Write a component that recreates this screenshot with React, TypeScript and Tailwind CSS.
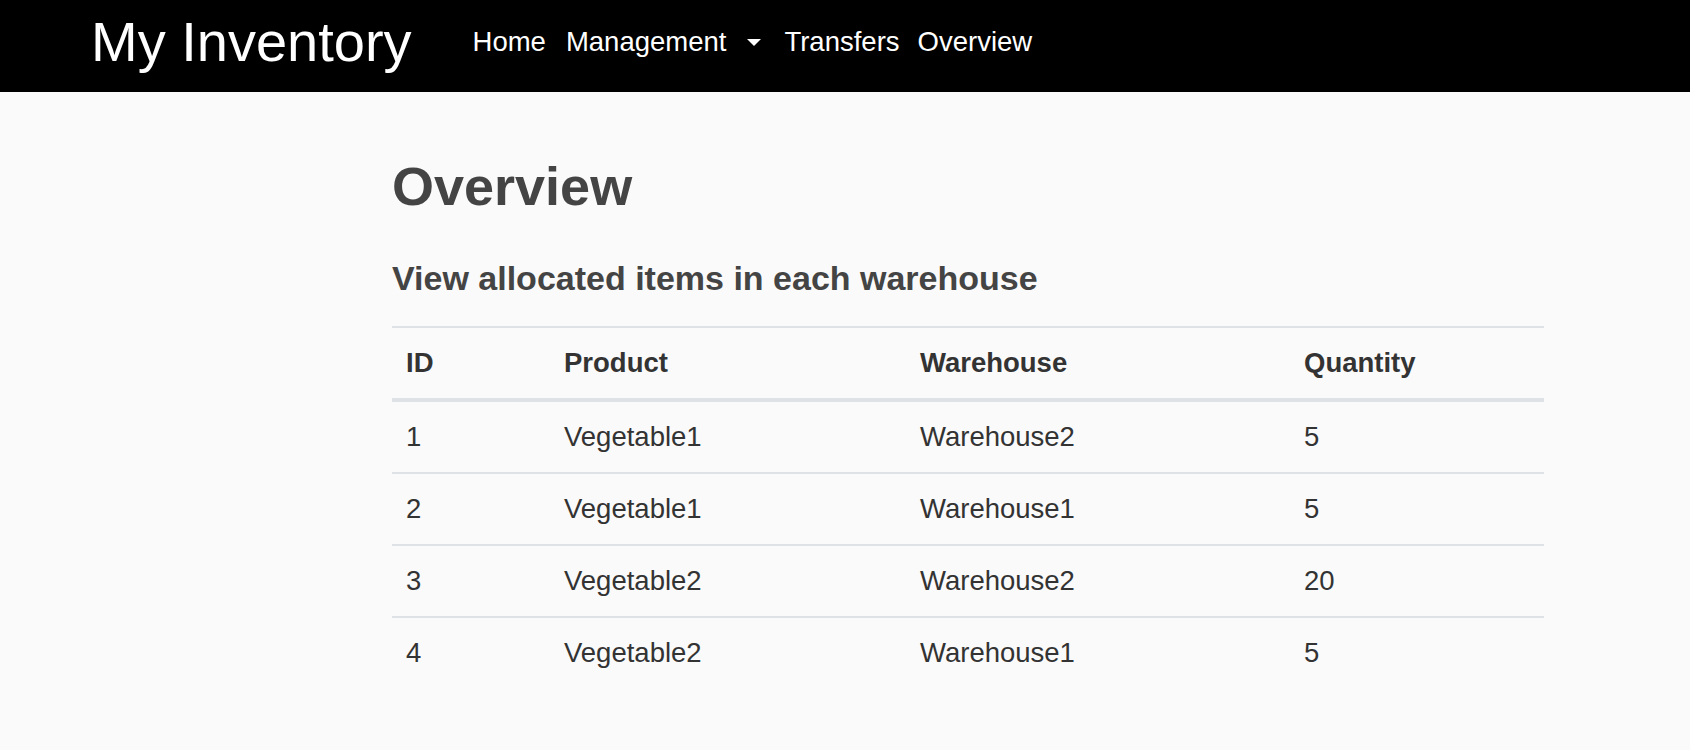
const rows = [
  { id: 1, product: 'Vegetable1', warehouse: 'Warehouse2', quantity: 5 },
  { id: 2, product: 'Vegetable1', warehouse: 'Warehouse1', quantity: 5 },
  { id: 3, product: 'Vegetable2', warehouse: 'Warehouse2', quantity: 20 },
  { id: 4, product: 'Vegetable2', warehouse: 'Warehouse1', quantity: 5 },
];

function Navbar() {
  return (
    <nav className="h-[92px] bg-black flex items-center pb-[8px] pl-[91px] text-white">
      <a href="#" className="text-[56px] leading-[56px] mr-[51px]">
        My Inventory
      </a>
      <div className="flex items-center text-[27.5px] leading-[40px]">
        <a href="#" className="px-[10px]">
          Home
        </a>
        <a href="#" className="px-[10px] flex items-center">
          Management
          <span className="ml-[21px] mr-[3px] w-0 h-0 border-t-[7px] border-x-[7px] border-x-transparent border-t-white" />
        </a>
        <a href="#" className="px-[10px]">
          Transfers
        </a>
        <a href="#" className="px-[8px]">
          Overview
        </a>
      </div>
    </nav>
  );
}

export default function App() {
  return (
    <div className="min-h-screen bg-[#fafafa] font-['Liberation_Sans',Arial,sans-serif]">
      <Navbar />
      <main className="ml-[392px] w-[1152px] pt-[67px]">
        <h1 className="text-[54px] leading-[54px] font-bold text-[#444444]">
          Overview
        </h1>
        <h4 className="mt-[48px] text-[34px] leading-[34px] font-bold text-[#444444]">
          View allocated items in each warehouse
        </h4>

        {/* Allocation table */}
        <table className="mt-[31px] w-full table-fixed border-separate border-spacing-0 text-[27.5px] leading-[40px] text-[#333333]">
          <colgroup>
            <col className="w-[158px]" />
            <col className="w-[356px]" />
            <col className="w-[384px]" />
            <col className="w-[254px]" />
          </colgroup>
          <thead>
            <tr>
              {['ID', 'Product', 'Warehouse', 'Quantity'].map((label) => (
                <th
                  key={label}
                  className="text-left font-bold px-[14px] py-[15px] border-t-2 border-b-4 border-[#dee2e6]"
                >
                  {label}
                </th>
              ))}
            </tr>
          </thead>
          <tbody>
            {rows.map((row, i) => {
              const cell =
                i === 0
                  ? 'px-[14px] py-[15px]'
                  : 'px-[14px] py-[15px] border-t-2 border-[#dee2e6]';
              return (
                <tr key={row.id}>
                  <td className={cell}>{row.id}</td>
                  <td className={cell}>{row.product}</td>
                  <td className={cell}>{row.warehouse}</td>
                  <td className={cell}>{row.quantity}</td>
                </tr>
              );
            })}
          </tbody>
        </table>
      </main>
    </div>
  );
}
